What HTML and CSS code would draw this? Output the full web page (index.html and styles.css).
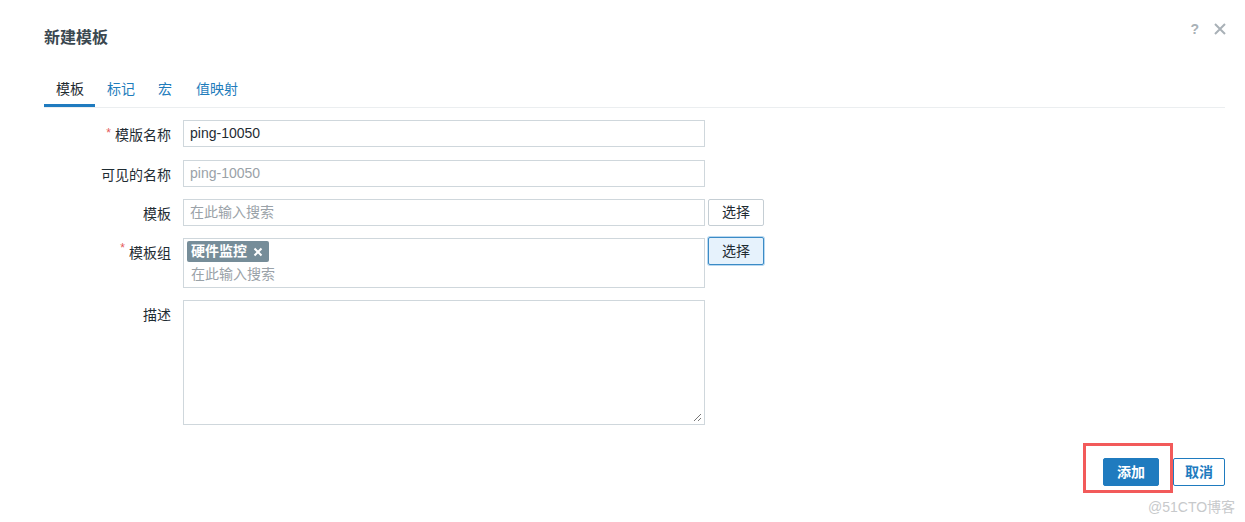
FILE: index.html
```html
<!DOCTYPE html>
<html lang="zh">
<head>
<meta charset="utf-8">
<link rel="stylesheet" href="styles.css">
</head>
<body>
<div class="dialog">
  <div class="header">
    <h1 class="title">新建模板</h1>
    <div class="header-icons">
      <span class="help">?</span>
      <svg class="close" width="12" height="12" viewBox="0 0 12 12"><path d="M1 1L11 11M11 1L1 11" stroke="#a9b1b7" stroke-width="2" fill="none"/></svg>
    </div>
  </div>
  <div class="tabs">
    <span class="tab active">模板</span>
    <span class="tab">标记</span>
    <span class="tab">宏</span>
    <span class="tab">值映射</span>
  </div>
  <div class="form">
    <label class="label first"><span class="req">*</span>模版名称</label>
    <div class="field first"><div class="input">ping-10050</div></div>

    <label class="label">可见的名称</label>
    <div class="field"><div class="input placeholder">ping-10050</div></div>

    <label class="label">模板</label>
    <div class="field"><div class="input placeholder">在此输入搜索</div><button class="btn">选择</button></div>

    <label class="label label-top"><span class="req">*</span>模板组</label>
    <div class="field field-top">
      <div class="multi">
        <span class="tag">硬件监控<svg class="tag-x" width="10" height="10" viewBox="0 0 10 10"><path d="M1.5 1.5L8.5 8.5M8.5 1.5L1.5 8.5" stroke="#fff" stroke-width="2" fill="none"/></svg></span>
        <div class="placeholder ms-ph">在此输入搜索</div>
      </div>
      <button class="btn focused">选择</button>
    </div>

    <label class="label label-top desc-label">描述</label>
    <div class="field field-top">
      <div class="textarea">
        <svg class="grip" width="9" height="9" viewBox="0 0 9 9"><path d="M8 1L1 8M8 5L5 8" stroke="#777" stroke-width="1" fill="none"/></svg>
      </div>
    </div>
  </div>
  <div class="footer">
    <button class="btn primary">添加</button>
    <button class="btn secondary">取消</button>
  </div>
  <div class="highlight"></div>
  <div class="watermark">@51CTO博客</div>
</div>
</body>
</html>
```
FILE: styles.css
```css
* { box-sizing: border-box; }
html, body { margin: 0; padding: 0; background: #fff; }
body {
  font-family: "Liberation Sans", "Noto Sans CJK SC", sans-serif;
  font-size: 14px;
  color: #1f2c33;
  width: 1245px;
  height: 522px;
  overflow: hidden;
}
.dialog {
  position: relative;
  padding: 0 20px 0 44px;
  height: 522px;
}
.header {
  display: flex;
  justify-content: space-between;
  align-items: flex-start;
  height: 74px;
}
.title {
  margin: 28px 0 0 0;
  font-size: 16px;
  font-weight: bold;
  color: #3b4850;
  line-height: 20px;
}
.header-icons {
  display: flex;
  align-items: center;
  gap: 15px;
  margin-top: 22px;
  margin-right: -1px;
}
.help {
  color: #a9b1b7;
  font-size: 14px;
  font-weight: bold;
  line-height: 14px;
}
.close { display: block; }
.tabs {
  display: flex;
  border-bottom: 1px solid #ebeef0;
  height: 34px;
}
.tab {
  padding: 6px 11px 0;
  color: #1f7dbc;
  line-height: 18px;
  border-bottom: 3px solid transparent;
}
.tab.active {
  color: #1f2c33;
  border-bottom-color: #1f7bbf;
  padding: 6px 11px 0 12px;
}
.tab:nth-child(2) { margin-left: 1px; }
.tab:nth-child(3) { margin-left: 1px; }
.tab:nth-child(4) { margin-left: 2px; }
.form {
  display: grid;
  grid-template-columns: 127px auto;
  column-gap: 12px;
  row-gap: 12px;
  margin-top: 12px;
}
.label {
  display: flex;
  justify-content: flex-end;
  align-items: center;
  height: 27px;
  color: #1f2c33;
}
.label.first, .field.first { margin-bottom: 1px; }
.label-top { align-items: flex-start; padding-top: 4px; }
.desc-label { padding-top: 4px; }
.req {
  color: #e45959;
  font-size: 12px;
  margin-right: 4px;
  position: relative;
  top: -1px;
}
.field {
  display: flex;
  align-items: center;
  gap: 3px;
}
.field-top { align-items: flex-start; }
.input {
  width: 522px;
  height: 27px;
  border: 1px solid #cfd7dc;
  padding: 0 6px;
  line-height: 25px;
  color: #1f2c33;
}
.placeholder { color: #9aa2a8; }
.input.placeholder { color: #9aa2a8; }
.btn {
  font-family: "Liberation Sans", "Noto Sans CJK SC", sans-serif;
  font-size: 14px;
  height: 27px;
  width: 56px;
  border: 1px solid #c5ced4;
  border-radius: 2px;
  background: #fff;
  color: #1f2c33;
  padding: 0;
  line-height: 25px;
}
.btn.focused {
  background: #e6f2fc;
  border-color: #3b8bc6;
  box-shadow: 0 0 0 1px #b9d8f0;
  height: 28px;
  margin-top: -1px;
}
.multi {
  width: 522px;
  height: 50px;
  border: 1px solid #cfd7dc;
  padding: 2px 3px 0 3px;
}
.tag {
  display: inline-flex;
  align-items: center;
  gap: 6px;
  height: 21px;
  padding: 0 6px 0 4px;
  background: #768d99;
  color: #fff;
  font-weight: bold;
  border-radius: 2px;
  line-height: 21px;
}
.tag-x { display: block; }
.ms-ph { padding: 2px 0 0 4px; line-height: 20px; }
.textarea {
  position: relative;
  width: 522px;
  height: 125px;
  border: 1px solid #cfd7dc;
}
.grip {
  position: absolute;
  right: 2px;
  bottom: 2px;
}
.footer {
  display: flex;
  justify-content: flex-end;
  gap: 14px;
  margin-top: 33px;
}
.btn.primary {
  background: #1f7bbf;
  border-color: #1f7bbf;
  color: #fff;
  font-weight: bold;
  height: 28px;
  width: 56px;
}
.btn.secondary {
  color: #1f7bbf;
  border-color: #1f7bbf;
  font-weight: bold;
  height: 28px;
  width: 52px;
}
.highlight {
  position: absolute;
  left: 1083px;
  top: 443px;
  width: 90px;
  height: 50px;
  border: 3px solid #f25a5a;
}
.watermark {
  position: absolute;
  left: 1148px;
  top: 496px;
  font-size: 14px;
  color: #c7c9cb;
}
```
